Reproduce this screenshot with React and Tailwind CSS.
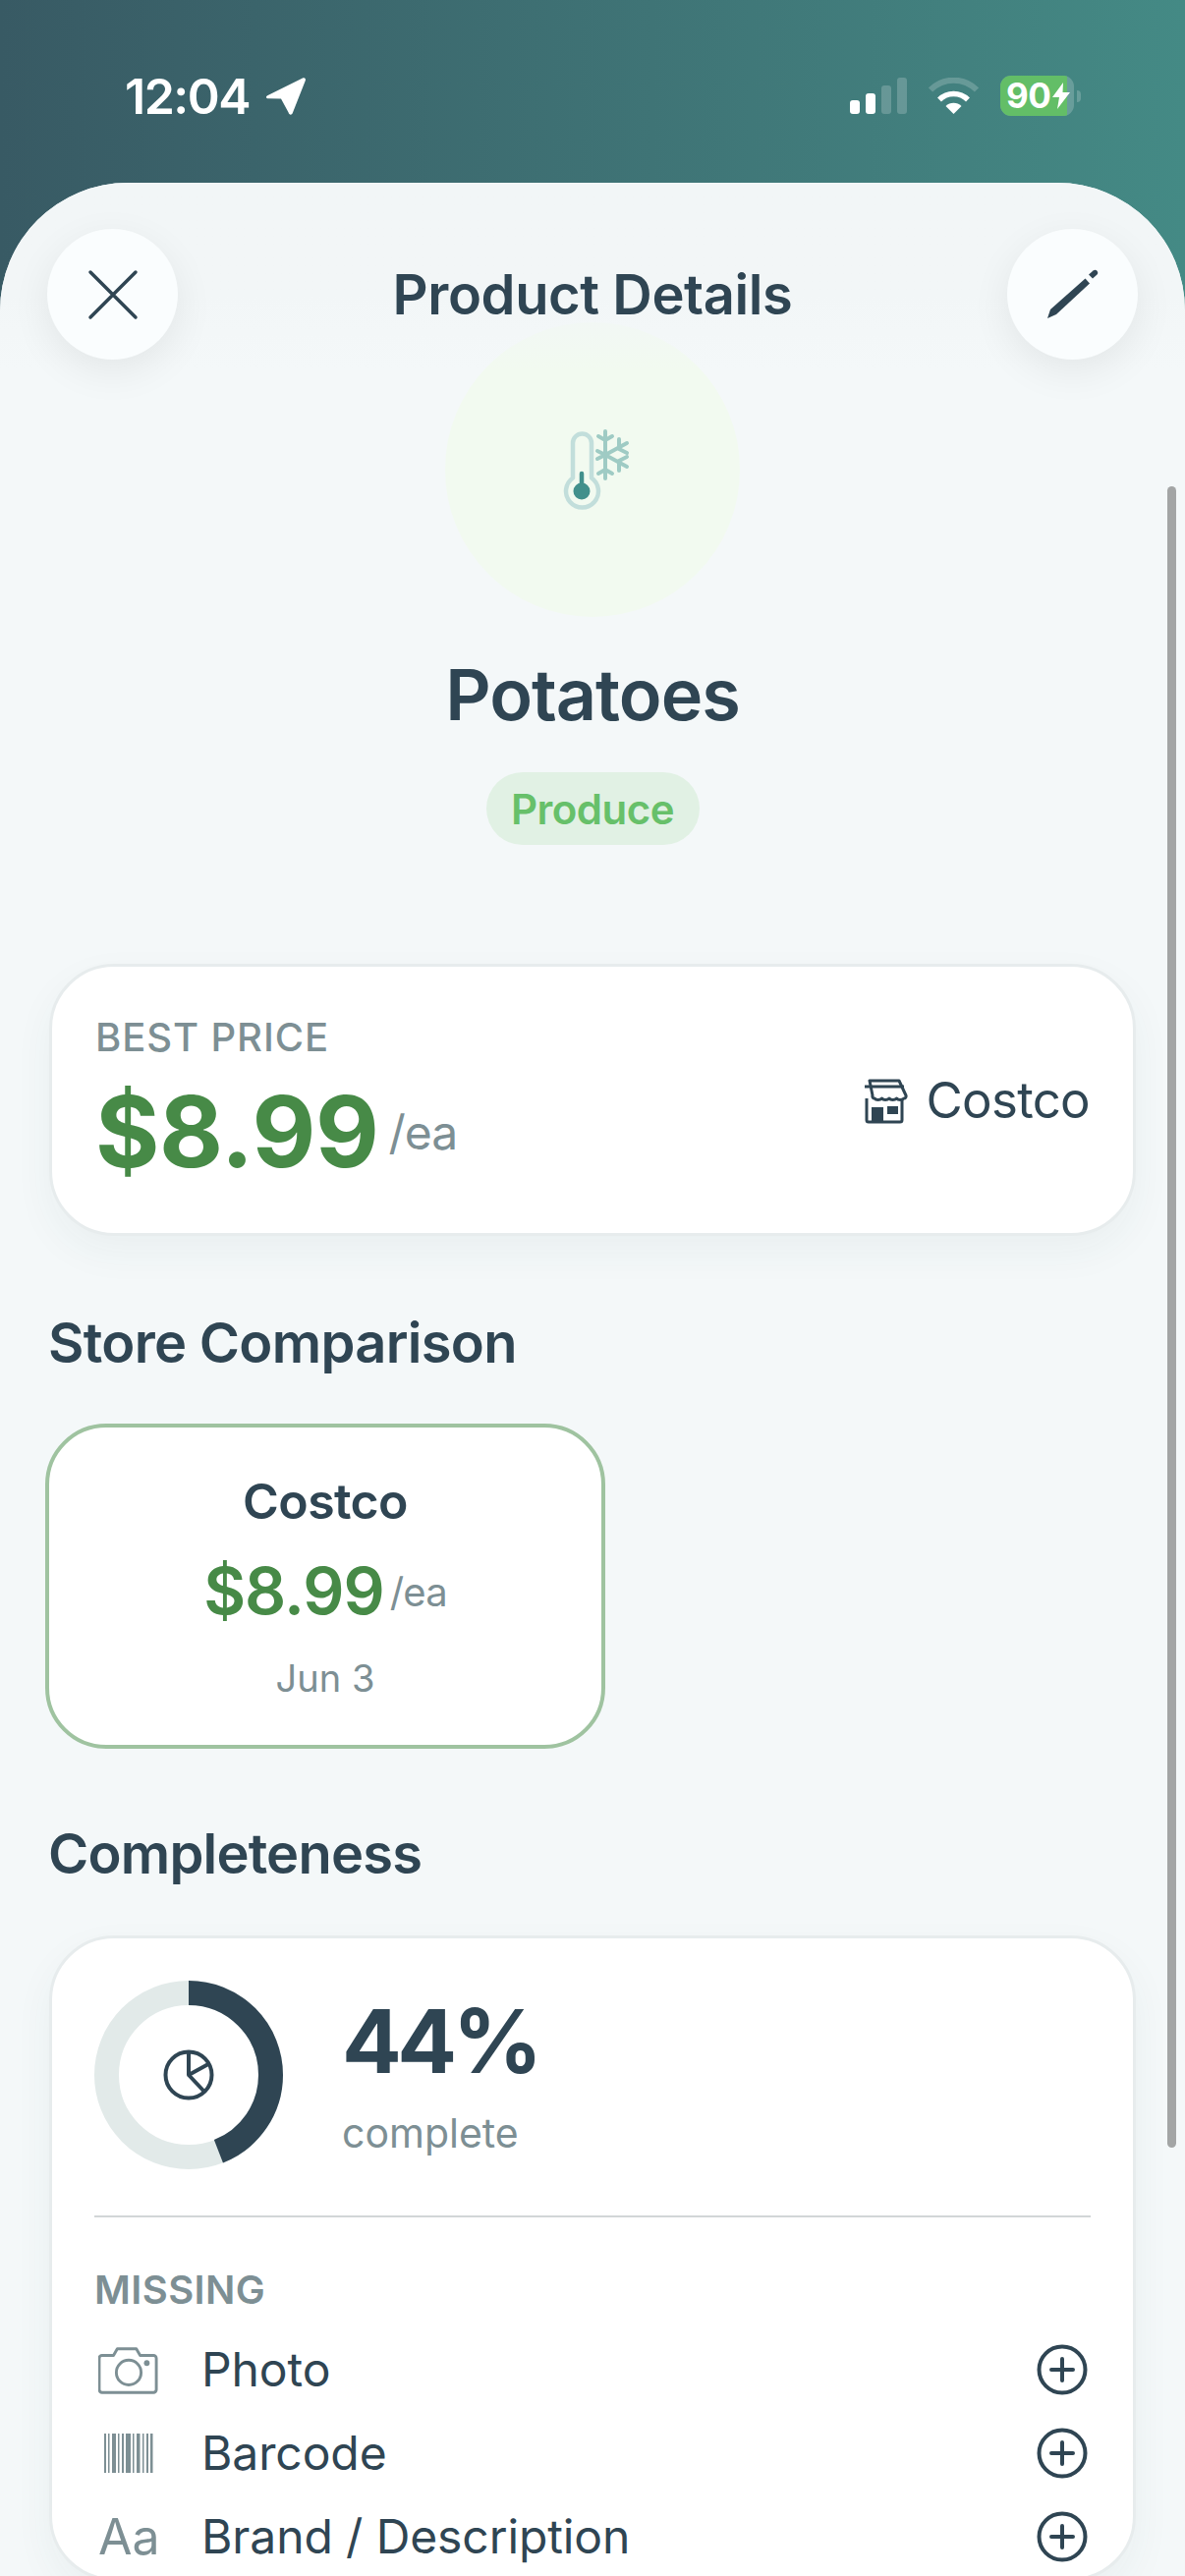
import React from "react";

const Plus = () => (
  <svg className="mr-[3px]" width="52" height="52" viewBox="0 0 52 52" fill="none" stroke="#2f4553" strokeWidth="4" strokeLinecap="round">
    <circle cx="26" cy="26" r="23.5" />
    <path d="M26 15v22M15 26h22" />
  </svg>
);

const Row = ({ icon, label }) => (
  <div className="flex h-[85px] items-center">
    <div className="flex w-[109px] shrink-0 items-center pl-[4px]">{icon}</div>
    <span className="flex-1 text-[48px] text-[#2f4553] tracking-[-0.1px]">{label}</span>
    <Plus />
  </div>
);

export default function App() {
  return (
    <div className="relative flex h-[2622px] w-[1206px] flex-col overflow-hidden bg-gradient-to-r from-[#385a64] to-[#448a85] font-['Inter','Noto_Sans',sans-serif]">
      {/* status bar */}
      <div className="flex h-[186px] shrink-0 items-start justify-between pl-[127px] pr-[106px] pt-[77px]">
        <div className="flex items-center gap-[16px]">
          <span className="text-[50px] leading-[42px] font-semibold text-white tracking-[-1.5px]">12:04</span>
          <svg width="42" height="40" viewBox="272 78 42 40" fill="#fff">
            <path d="M310 79.500c2-.8 3.300.3 2.900 2.300L300 114.500c-.9 3-3.700 3-4.400.1L288 100.500l-13-.3c-2.300-.1-2.800-2-.8-3z" />
          </svg>
        </div>
        <div className="flex items-center gap-[22px]">
          <div className="flex h-[37px] items-end gap-[6px]">
            <div className="h-[14px] w-[10px] rounded-[3px] bg-white" />
            <div className="h-[21px] w-[10px] rounded-[3px] bg-white" />
            <div className="h-[29px] w-[10px] rounded-[3px] bg-white/20" />
            <div className="h-[37px] w-[10px] rounded-[3px] bg-white/20" />
          </div>
          <svg width="51" height="37" viewBox="0 0 51 37" fill="none">
            <path d="M2 12.500A33 33 0 0 1 49 12.500" stroke="#fff" strokeOpacity=".2" strokeWidth="6" />
            <path d="M11 22.500A20.500 20.500 0 0 1 40 22.500" stroke="#fff" strokeWidth="5.500" />
            <path d="M25.500 37L17.500 29A11.500 11.500 0 0 1 33.500 29Z" fill="#fff" />
          </svg>
          <div className="flex items-center gap-[3px]">
            <div className="relative flex h-[41px] w-[75px] overflow-hidden rounded-[11px] bg-white/20">
              <div className="flex h-full w-[68px] items-center bg-[#63be67] pl-[6px]">
                <span className="text-[35px] leading-none font-bold text-white tracking-[-0.5px]">90</span>
              </div>
              <svg className="absolute left-[53px] top-[7px]" width="18" height="27" viewBox="0 0 18 27" fill="#fff">
                <path d="M11 0L0 15h7L5 27 18 10h-7.500z" />
              </svg>
            </div>
            <div className="h-[12px] w-[4px] rounded-r-full bg-white/20" />
          </div>
        </div>
      </div>

      {/* sheet */}
      <div className="relative flex-1 rounded-t-[130px] bg-[#f4f8f9] px-[50px] pt-[142px]">
        {/* floating header */}
        <div className="absolute inset-x-0 top-0 z-10 flex h-[190px] items-start justify-between rounded-t-[130px] bg-gradient-to-b from-[#f2f6f7] from-60% to-transparent px-[48px] pt-[47px]">
          <button className="flex h-[133px] w-[133px] items-center justify-center rounded-full bg-[#fafdfe] shadow-[0_12px_40px_rgba(0,0,0,0.07)]">
            <svg width="52" height="52" viewBox="0 0 52 52" fill="none" stroke="#2f4553" strokeWidth="3.500" strokeLinecap="round">
              <path d="M3 3l46 46M49 3L3 49" />
            </svg>
          </button>
          <h1 className="mt-[37px] text-[56px] leading-[60px] font-semibold text-[#2f4553] tracking-[-0.4px]">Product Details</h1>
          <button className="flex h-[133px] w-[133px] items-center justify-center rounded-full bg-[#fafdfe] shadow-[0_12px_40px_rgba(0,0,0,0.07)]">
            <svg width="56" height="52" viewBox="1063 276 56 52" fill="#2f4553">
              <path d="M1066 326l3-9 35.500-31.500 4.500 5-34 31.500z" />
              <path d="M1108 281.500l4.500-4c1.500-1 3-.8 4 .3s1.100 2.700 0 3.700l-4.500 4z" />
            </svg>
          </button>
        </div>

        {/* hero */}
        <div className="flex flex-col items-center">
          <div className="flex h-[300px] w-[300px] items-center justify-center rounded-full bg-[#f2faf0]">
            <svg width="80" height="88" viewBox="562 433 80 88" fill="none" strokeLinecap="round" strokeLinejoin="round">
              <path d="M582 485.500V450a9.500 9.500 0 0 1 19 0v35.500a16.500 16.500 0 1 1-19 0z" stroke="#c2dedb" strokeWidth="4.500" />
              <circle cx="591" cy="499" r="8.500" fill="#42908c" />
              <path d="M591 481v16" stroke="#42908c" strokeWidth="4.500" />
              <g stroke="#9fcbc4" strokeWidth="4">
                <path d="M615 438v48M608 443l7 4 7-4M608 481l7-4 7 4" />
                <path d="M615 462l22-12M615 462l22 12" />
                <path d="M629 446v10l8 4M629 478v-10l8-4" />
                <path d="M607 458l8 4-8 4" />
              </g>
            </svg>
          </div>
          <h2 className="mt-[43px] text-[72px] leading-[72px] font-semibold text-[#2f4553] tracking-[-1px]">Potatoes</h2>
          <div className="mt-[43px] flex h-[74px] w-[217px] items-center justify-center rounded-full bg-[#e1f1e4]">
            <span className="text-[42px] font-semibold text-[#67c06a] tracking-[-0.5px]">Produce</span>
          </div>
        </div>

        {/* best price */}
        <div className="mt-[121px] flex h-[277px] items-center justify-between rounded-[66px] border-[3px] border-[#e7eced] bg-white pl-[44px] pr-[44px] shadow-[0_16px_40px_rgba(47,69,83,0.05)]">
          <div className="flex flex-col">
            <span className="text-[40px] leading-[48px] font-medium text-[#7d8f94] tracking-[0.9px]">BEST PRICE</span>
            <div className="mt-[16px] flex items-center gap-[10px]">
              <span className="text-[100px] leading-[112px] font-bold text-[#478a47] tracking-[-0.4px]">$8.99</span>
              <span className="mt-[3px] text-[48px] leading-[58px] text-[#7d8f94] tracking-[-1px]">/ea</span>
            </div>
          </div>
          <div className="mt-[2px] flex items-center gap-[19px]">
            <svg width="48" height="46" viewBox="877 1098 48 46" fill="none" stroke="#2f4553" strokeWidth="3">
              <path d="M886 1100h30l7 15c.5 1.500-.5 3-2 3-2 2-6 2-7.500 0-2 2-6 2-7.500 0-2 2-6 2-7.500 0-2 2-6 2-7.500 0-1.500 0-2.500-1.500-2-3z" strokeLinejoin="round" />
              <path d="M881 1106h40" />
              <path d="M883 1118v22a2 2 0 0 0 2 2h32a2 2 0 0 0 2-2v-22" />
              <rect x="888" y="1127" width="12" height="15" fill="#2f4553" stroke="none" />
              <rect x="904" y="1126" width="11" height="8" fill="#2f4553" stroke="none" />
            </svg>
            <span className="text-[51px] text-[#2f4553] tracking-[-0.7px]">Costco</span>
          </div>
        </div>

        {/* store comparison */}
        <h3 className="mt-[75px] -ml-[1px] text-[56px] leading-[68px] font-semibold text-[#2f4553] tracking-[-0.7px]">Store Comparison</h3>
        <div className="mt-[48px] -ml-[4px] flex h-[331px] w-[570px] flex-col items-center rounded-[62px] border-[4px] border-[#9fc3a0] bg-white pt-[45px]">
          <span className="text-[50px] leading-[60px] font-semibold text-[#2f4553] tracking-[-0.6px]">Costco</span>
          <div className="mt-[23px] flex items-center gap-[6px]">
            <span className="text-[66px] leading-[76px] font-semibold text-[#478a47] tracking-[-1px]">$8.99</span>
            <span className="mt-[4px] text-[40px] leading-[48px] text-[#7d8f94] tracking-[-0.8px]">/ea</span>
          </div>
          <span className="mt-[28px] text-[38px] leading-[46px] text-[#7d8f94]">Jun 3</span>
        </div>

        {/* completeness */}
        <h3 className="mt-[73px] -ml-[1px] text-[56px] leading-[68px] font-semibold text-[#2f4553] tracking-[-0.8px]">Completeness</h3>
        <div className="mt-[49px] rounded-[66px] border-[3px] border-[#e7eced] bg-white px-[43px] pt-[43px] shadow-[0_16px_40px_rgba(47,69,83,0.05)]">
          <div className="flex items-center gap-[60px]">
            <div className="relative h-[192px] w-[192px] shrink-0">
              <svg width="192" height="192" viewBox="0 0 192 192" fill="none" strokeWidth="25">
                <circle cx="96" cy="96" r="83.500" stroke="#e2eae9" />
                <circle cx="96" cy="96" r="83.500" stroke="#2f4553" strokeDasharray="230.800 524.600" transform="rotate(-90 96 96)" />
              </svg>
              <svg className="absolute left-[70px] top-[70px]" width="52" height="52" viewBox="0 0 52 52" fill="none" stroke="#2f4553" strokeWidth="4" strokeLinejoin="round">
                <circle cx="26" cy="26" r="23.500" />
                <path d="M26 3v23l20-11M26 26l16 17" />
              </svg>
            </div>
            <div className="flex flex-col">
              <span className="text-[90px] leading-[100px] font-bold text-[#2f4553] tracking-[-4.500px]">44%</span>
              <span className="mt-[18px] text-[41px] leading-[50px] text-[#7d8f94]">complete</span>
            </div>
          </div>
          <div className="mt-[47px] h-[2px] bg-[#d2d6d7]" />
          <div className="mt-[51px] text-[40px] leading-[46px] font-semibold text-[#7d8f94] tracking-[0.4px]">MISSING</div>
          <div className="mt-[15px] flex flex-col">
            <Row
              label="Photo"
              icon={
                <svg width="62" height="50" viewBox="100 2386 64 50" fill="none" stroke="#7d8f94" strokeWidth="3" strokeLinejoin="round">
                  <path d="M104 2396h12l4-7h20l4 7h14a3 3 0 0 1 3 3v33a3 3 0 0 1-3 3h-54a3 3 0 0 1-3-3v-33a3 3 0 0 1 3-3z" />
                  <circle cx="132" cy="2414" r="13" />
                  <circle cx="151" cy="2404" r="3" fill="#7d8f94" stroke="none" />
                </svg>
              }
            />
            <Row
              label="Barcode"
              icon={
                <svg className="ml-[6px]" width="50" height="40" viewBox="0 0 50 40" fill="#7d8f94">
                  <rect x="0" width="2" height="40" /><rect x="4" width="1.500" height="40" /><rect x="8" width="4" height="40" />
                  <rect x="14" width="1.500" height="40" /><rect x="18" width="2" height="40" /><rect x="22" width="5" height="40" />
                  <rect x="29" width="1.500" height="40" /><rect x="33" width="3.500" height="40" /><rect x="39" width="1.500" height="40" />
                  <rect x="43" width="2" height="40" /><rect x="47" width="2.500" height="40" />
                </svg>
              }
            />
            <Row label="Brand / Description" icon={<span className="text-[50px] leading-none text-[#7d8f94]">Aa</span>} />
          </div>
        </div>
      </div>

      {/* scrollbar */}
      <div className="absolute left-[1188px] top-[495px] h-[1691px] w-[9px] rounded-full bg-[#a3a5a5]" />
    </div>
  );
}
